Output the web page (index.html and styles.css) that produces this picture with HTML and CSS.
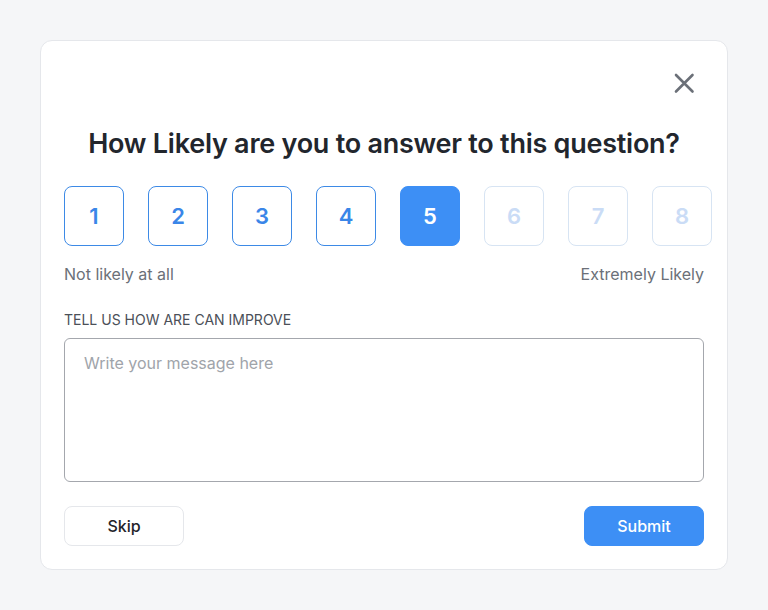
FILE: index.html
```html
<!DOCTYPE html>
<html lang="en">
<head>
<meta charset="utf-8">
<title>Survey</title>
<link rel="stylesheet" href="styles.css">
</head>
<body>
<div class="page">
  <div class="card">
    <div class="card-head">
      <button class="close" aria-label="Close">
        <svg width="24" height="24" viewBox="0 0 24 24" fill="none" stroke="#6b7078" stroke-width="2.6" stroke-linecap="round"><path d="M4 4L20.5 20.5M20.5 4L4 20.5"/></svg>
      </button>
    </div>
    <h1 class="title">How Likely are you to answer to this question?</h1>
    <div class="scale">
      <button class="num">1</button>
      <button class="num">2</button>
      <button class="num">3</button>
      <button class="num">4</button>
      <button class="num active">5</button>
      <button class="num muted">6</button>
      <button class="num muted">7</button>
      <button class="num muted">8</button>
    </div>
    <div class="scale-labels">
      <span>Not likely at all</span>
      <span>Extremely Likely</span>
    </div>
    <label class="field-label" for="msg">TELL US HOW ARE CAN IMPROVE</label>
    <textarea id="msg" class="message" placeholder="Write your message here"></textarea>
    <div class="actions">
      <button class="btn btn-skip">Skip</button>
      <button class="btn btn-submit">Submit</button>
    </div>
  </div>
</div>
</body>
</html>
```

FILE: styles.css
```css
* { box-sizing: border-box; }
html, body { margin: 0; padding: 0; }
body {
  background: #f5f6f8;
  font-family: Inter, "Noto Sans", sans-serif;
  width: 768px;
  height: 610px;
  overflow: hidden;
}
.page { padding: 40px; }
.card {
  width: 688px;
  height: 530px;
  background: #ffffff;
  border: 1px solid #e5e7eb;
  border-radius: 12px;
  padding: 30px 23px 23px;
  display: flex;
  flex-direction: column;
}
.card-head {
  display: flex;
  justify-content: flex-end;
  padding-right: 8px;
}
.close {
  width: 24px;
  height: 24px;
  padding: 0;
  border: 0;
  background: none;
  display: flex;
}
.title {
  margin: 31px 0 0;
  font-size: 27px;
  line-height: 36px;
  font-weight: 600;
  color: #22262d;
  text-align: center;
  letter-spacing: -0.25px;
}
.scale {
  margin-top: 24px;
  display: flex;
  gap: 24px;
}
.num {
  flex: 0 0 60px;
  width: 60px;
  height: 60px;
  border: 1px solid #3d8ae6;
  border-radius: 8px;
  background: #fff;
  color: #3a86e8;
  font-family: Inter, sans-serif;
  font-size: 22px;
  font-weight: 600;
  padding: 0;
}
.num.active {
  background: #3d8ff5;
  border-color: #3d8ff5;
  color: #fff;
}
.num.muted {
  border-color: #d7e4f3;
  color: #cadcf6;
}
.scale-labels {
  margin-top: 18px;
  display: flex;
  justify-content: space-between;
  font-size: 16px;
  line-height: 20px;
  color: #6b7078;
}
.field-label {
  margin-top: 26px;
  font-size: 14px;
  line-height: 20px;
  color: #4b5058;
}
.message {
  margin-top: 8px;
  height: 144px;
  width: 100%;
  border: 1px solid #a4a7ad;
  border-radius: 6px;
  padding: 13px 19px;
  font-family: Inter, sans-serif;
  font-size: 16px;
  line-height: 22px;
  resize: none;
  color: #1f2329;
}
.message::placeholder { color: #a0a4aa; }
.actions {
  margin-top: 24px;
  display: flex;
  justify-content: space-between;
}
.btn {
  width: 120px;
  height: 40px;
  border-radius: 8px;
  font-family: Inter, sans-serif;
  font-size: 16px;
  font-weight: 500;
  padding: 0;
}
.btn-skip {
  background: #fff;
  border: 1px solid #e5e7eb;
  color: #1f2329;
}
.btn-submit {
  background: #3d8ff5;
  border: 1px solid #3d8ff5;
  color: #fff;
}
```
